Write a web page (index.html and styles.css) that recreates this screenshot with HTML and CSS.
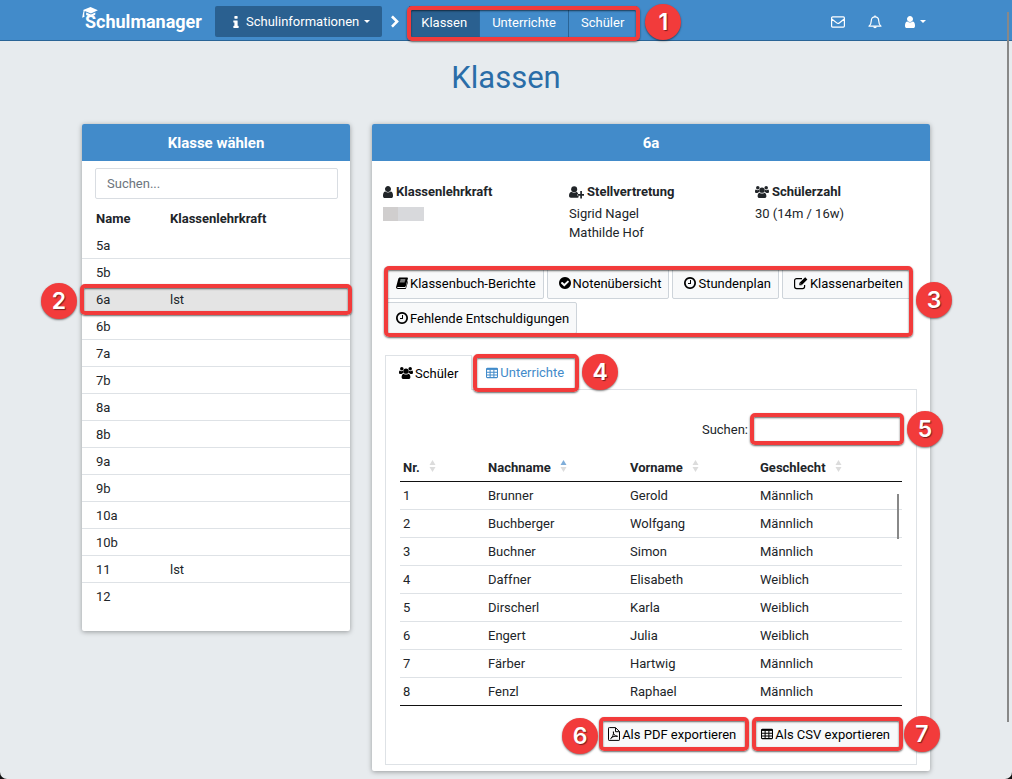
FILE: index.html
```html
<!DOCTYPE html>
<html lang="de">
<head>
<meta charset="utf-8">
<meta name="viewport" content="width=device-width, initial-scale=1">
<title>Schulmanager – Klassen</title>
<link rel="stylesheet" href="styles.css">
</head>
<body>
<svg class="sprite" aria-hidden="true">
  <symbol id="i-user" viewBox="256 0 1280 1792"><path d="M1536 1399q0 109-62.5 187t-150.5 78h-854q-88 0-150.5-78t-62.5-187q0-85 8.5-160.5t31.5-152 58.5-131 94-89 134.5-34.5q131 128 313 128t313-128q76 0 134.5 34.5t94 89 58.5 131 31.5 152 8.5 160.5zm-256-887q0 159-112.5 271.5t-271.5 112.5-271.5-112.5-112.5-271.5 112.5-271.5 271.5-112.5 271.5 112.5 112.5 271.5z"/></symbol>
  <symbol id="i-chevron" viewBox="320 64 1088 1664"><path d="M1363 877l-742 742q-19 19-45 19t-45-19l-166-166q-19-19-19-45t19-45l531-531-531-531q-19-19-19-45t19-45l166-166q19-19 45-19t45 19l742 742q19 19 19 45t-19 45z"/></symbol>
  <symbol id="i-info" viewBox="576 0 640 1664"><path d="M1216 1344v128q0 26-19 45t-45 19h-512q-26 0-45-19t-19-45v-128q0-26 19-45t45-19h64v-384h-64q-26 0-45-19t-19-45v-128q0-26 19-45t45-19h384q26 0 45 19t19 45v576h64q26 0 45 19t19 45zm-128-1152v192q0 26-19 45t-45 19h-256q-26 0-45-19t-19-45v-192q0-26 19-45t45-19h256q26 0 45 19t19 45z"/></symbol>
  <symbol id="i-check" viewBox="128 0 1536 1792"><path d="M1412 734q0-28-18-46l-91-90q-19-19-45-19t-45 19l-408 407-226-226q-19-19-45-19t-45 19l-91 90q-18 18-18 46 0 27 18 45l362 362q19 19 45 19 27 0 46-19l543-543q18-18 18-45zm252 162q0 209-103 385.5t-279.5 279.5-385.5 103-385.5-103-279.5-279.5-103-385.5 103-385.5 279.5-279.5 385.5-103 385.5 103 279.5 279.5 103 385.5z"/></symbol>
  <symbol id="i-clock" viewBox="128 0 1536 1792"><path d="M1024 544v448q0 14-9 23t-23 9h-320q-14 0-23-9t-9-23v-64q0-14 9-23t23-9h224v-352q0-14 9-23t23-9h64q14 0 23 9t9 23zm416 352q0-148-73-273t-198-198-273-73-273 73-198 198-73 273 73 273 198 198 273 73 273-73 198-198 73-273zm224 0q0 209-103 385.5t-279.5 279.5-385.5 103-385.5-103-279.5-279.5-103-385.5 103-385.5 279.5-279.5 385.5-103 385.5 103 279.5 279.5 103 385.5z"/></symbol>
  <symbol id="i-userplus" viewBox="0 0 16 14"><circle cx="5.5" cy="4" r="3.200"/><path d="M2.800 6.800C1 7 0 8.700 0 11c0 1.300.8 2 2 2h7.200c.5 0 .8-.1 1-.3V11H8.800V9h.9C9.300 7.700 8.700 7 8 6.800c-1.500 1.300-3.700 1.300-5.200 0z"/><path d="M12 6h1.800v3.100H17v1.800h-3.200V14H12v-3.100H9.200V9.100H12z"/></symbol>
  <symbol id="i-users" viewBox="0 0 15 14"><circle cx="7.500" cy="5" r="2.900"/><path d="M4.900 7.800C3.300 8 2.800 9.700 2.800 11.500c0 1.200.8 2 2 2h5.400c1.200 0 2-.8 2-2 0-1.800-.5-3.500-2.100-3.700-1.600 1.200-3.600 1.200-5.200 0z"/><circle cx="3" cy="2.400" r="1.900"/><circle cx="12" cy="2.400" r="1.900"/><path d="M1 4.300c1 .9 2.300 1 3.300.4-.1 1 .2 1.700.7 2.300-.9 0-1.700.3-2.300 1H1.500C.6 8 0 7.500 0 6.700 0 5.600.2 4.500 1 4.300zM14 4.300c-1 .9-2.300 1-3.300.4.1 1-.2 1.700-.7 2.300.9 0 1.700.3 2.300 1h1.200c.9 0 1.500-.5 1.500-1.300 0-1.100-.2-2.200-1-2.400z"/></symbol>
  <symbol id="i-book" viewBox="0 0 13 14"><path fill-rule="evenodd" d="M4.200 1h7.900c.6 0 1 .5.800 1.200l-2.300 8c-.3.900-.8 1.200-1.500 1.200H2c-.5 0-.9.200-.8.600.1.300.4.400.9.400h7.600c.4 0 .7-.2.800-.6l2.100-7.100c.5.300.5.800.3 1.400l-2 6.500c-.2.700-.7 1-1.400 1H2C.8 13.600-.2 12.500.1 11.300L2.500 2.500C2.800 1.600 3.300 1 4.200 1zM4.900 3.300l-.3.900h5.300l.3-.9zm-.6 2-.3.900h5.300l.3-.9z"/></symbol>
  <symbol id="i-edit" viewBox="0 0 14 14"><path fill="none" stroke="currentColor" stroke-width="1.200" d="M8 2.600H2.600a2 2 0 0 0-2 2v6a2 2 0 0 0 2 2h6a2 2 0 0 0 2-2V9"/><path d="M11.200 1.200 13.400 3.400 7.600 9.300H5.300V7z"/><path d="m6.200 7.500 1 1" stroke="#fff" stroke-width=".7"/></symbol>
  <symbol id="i-table" viewBox="0 0 14 14"><path fill="none" stroke="currentColor" stroke-width="1.200" d="M1.500 1.600h11q.9 0 .9.900v9q0 .9-.9.900h-11q-.9 0-.9-.9v-9q0-.9.900-.9zM.6 6.200h12.800M.6 9.300h12.800M4.800 3v9.400M9.200 3v9.400"/><path d="M.6 1.600h12.800v1.800H.6z"/></symbol>
  <symbol id="i-pdf" viewBox="0 0 12 14"><path fill="none" stroke="currentColor" d="M1.500.6h6l4 4v8.200q0 .6-.6.600H1.100q-.6 0-.6-.6V1.200q0-.6.6-.6zM7.500.8v3.900h3.900M2.600 11.600C4.800 10.200 5.900 6.600 5.400 4.700 5 6.900 6.900 9.500 9.600 9.300 7.400 8.800 4.500 9.400 2.600 11.600z"/></symbol>
  <symbol id="i-mail" viewBox="0 0 14 14"><path fill="none" stroke="currentColor" stroke-width="1.200" d="M1.600 1.900h10.800q1 0 1 1v8.200q0 1-1 1H1.600q-1 0-1-1V2.900q0-1 1-1zM.8 4 5.700 7.900q1.300 1 2.600 0L13.200 4"/></symbol>
  <symbol id="i-bell" viewBox="0 0 14 14"><path fill="none" stroke="currentColor" stroke-width="1.200" stroke-linejoin="round" d="M7 1.800c2.400 0 3.700 1.700 3.700 4 0 2.800.8 4.100 2.300 5.400H1c1.500-1.300 2.300-2.600 2.300-5.400 0-2.300 1.300-4 3.700-4z"/><path d="M6.300.4h1.400v1.500H6.300zM5.200 11.500h3.600a1.800 1.800 0 0 1-3.600 0z"/></symbol>
  <symbol id="i-cap" viewBox="0 0 18 14"><path d="M9 0 17 3.500 9.500 7 2.800 4.300C2.200 6 2 7.500 2.600 10.500L0 11.500C.8 8 .9 6 1.600 4L1 3.300zM4.300 5.900 9.500 8l4.700-2.200v2.400c-2 2.300-7 2.500-9.900.4z"/></symbol>
  <symbol id="i-sort" viewBox="0 0 7 12"><path class="sort-up" d="M3.500 0 6.500 5h-6z"/><path d="M.5 7h6l-3 5z"/></symbol>
</svg>

<header class="topbar">
  <div class="container topbar-row">
    <a class="brand" href="#"><svg class="brand-cap"><use href="#i-cap"/></svg>Schulmanager</a>
    <button class="module" type="button"><svg class="icon w-info"><use href="#i-info"/></svg>Schulinformationen<span class="caret"></span></button>
    <svg class="crumb"><use href="#i-chevron"/></svg>
    <nav class="subnav marked">
      <a class="subnav-link current" href="#">Klassen</a>
      <a class="subnav-link" href="#">Unterrichte</a>
      <a class="subnav-link" href="#">Schüler</a>
      <span class="frame frame-nav"></span><span class="badge badge-nav">1</span>
    </nav>
    <div class="tools">
      <button type="button" class="tool" aria-label="Nachrichten"><svg class="icon w14"><use href="#i-mail"/></svg></button>
      <button type="button" class="tool" aria-label="Benachrichtigungen"><svg class="icon w14"><use href="#i-bell"/></svg></button>
      <button type="button" class="tool" aria-label="Konto"><svg class="icon w10"><use href="#i-user"/></svg><span class="caret"></span></button>
    </div>
  </div>
</header>

<main class="container">
  <h1 class="title">Klassen</h1>
  <div class="columns">
    <section class="card card-list">
      <h2 class="card-head">Klasse wählen</h2>
      <div class="search-box"><input class="search" type="search" placeholder="Suchen..." aria-label="Klasse suchen"></div>
      <table class="classes">
        <thead><tr><th class="c-name">Name</th><th>Klassenlehrkraft</th></tr></thead>
        <tbody>
          <tr><td>5a</td><td></td></tr>
          <tr><td>5b</td><td></td></tr>
          <tr class="selected marked"><td>6a</td><td>lst<span class="frame frame-row"></span><span class="badge badge-row">2</span></td></tr>
          <tr><td>6b</td><td></td></tr>
          <tr><td>7a</td><td></td></tr>
          <tr><td>7b</td><td></td></tr>
          <tr><td>8a</td><td></td></tr>
          <tr><td>8b</td><td></td></tr>
          <tr><td>9a</td><td></td></tr>
          <tr><td>9b</td><td></td></tr>
          <tr><td>10a</td><td></td></tr>
          <tr><td>10b</td><td></td></tr>
          <tr><td>11</td><td>lst</td></tr>
          <tr><td>12</td><td></td></tr>
        </tbody>
      </table>
    </section>

    <section class="card card-detail">
      <h2 class="card-head">6a</h2>
      <div class="facts">
        <div><h3 class="fact-head"><svg class="icon w10"><use href="#i-user"/></svg>Klassenlehrkraft</h3><span class="redacted"></span></div>
        <div><h3 class="fact-head"><svg class="icon w15"><use href="#i-userplus"/></svg>Stellvertretung</h3>Sigrid Nagel<br>Mathilde Hof</div>
        <div><h3 class="fact-head"><svg class="icon w14"><use href="#i-users"/></svg>Schülerzahl</h3>30 (14m / 16w)</div>
      </div>
      <div class="actions marked">
        <button type="button" class="btn"><svg class="icon w12"><use href="#i-book"/></svg>Klassenbuch-Berichte</button>
        <button type="button" class="btn"><svg class="icon w12"><use href="#i-check"/></svg>Notenübersicht</button>
        <button type="button" class="btn"><svg class="icon w12"><use href="#i-clock"/></svg>Stundenplan</button>
        <button type="button" class="btn"><svg class="icon w14"><use href="#i-edit"/></svg>Klassenarbeiten</button>
        <button type="button" class="btn"><svg class="icon w12"><use href="#i-clock"/></svg>Fehlende Entschuldigungen</button>
        <span class="frame frame-actions"></span><span class="badge badge-actions">3</span>
      </div>
      <div class="tabs">
        <button type="button" class="tab active"><svg class="icon w14"><use href="#i-users"/></svg>Schüler</button>
        <button type="button" class="tab marked"><svg class="icon w12"><use href="#i-table"/></svg>Unterrichte<span class="frame frame-tab"></span><span class="badge badge-tab">4</span></button>
      </div>
      <div class="panel">
        <div class="filter">
          <label for="filter">Suchen:</label>
          <span class="marked"><input id="filter" class="filter-input" type="search"><span class="frame frame-input"></span><span class="badge badge-input">5</span></span>
        </div>
        <div class="table-wrap">
          <table class="students">
            <colgroup><col class="s-nr"><col class="s-last"><col class="s-first"><col></colgroup>
            <thead><tr>
              <th>Nr.<svg class="sort"><use href="#i-sort"/></svg></th>
              <th>Nachname<svg class="sort sorted"><use href="#i-sort"/></svg></th>
              <th>Vorname<svg class="sort"><use href="#i-sort"/></svg></th>
              <th>Geschlecht<svg class="sort"><use href="#i-sort"/></svg></th>
            </tr></thead>
            <tbody>
              <tr><td>1</td><td>Brunner</td><td>Gerold</td><td>Männlich</td></tr>
              <tr><td>2</td><td>Buchberger</td><td>Wolfgang</td><td>Männlich</td></tr>
              <tr><td>3</td><td>Buchner</td><td>Simon</td><td>Männlich</td></tr>
              <tr><td>4</td><td>Daffner</td><td>Elisabeth</td><td>Weiblich</td></tr>
              <tr><td>5</td><td>Dirscherl</td><td>Karla</td><td>Weiblich</td></tr>
              <tr><td>6</td><td>Engert</td><td>Julia</td><td>Weiblich</td></tr>
              <tr><td>7</td><td>Färber</td><td>Hartwig</td><td>Männlich</td></tr>
              <tr><td>8</td><td>Fenzl</td><td>Raphael</td><td>Männlich</td></tr>
            </tbody>
          </table>
          <span class="thumb"></span>
        </div>
        <div class="exports">
          <button type="button" class="btn marked"><svg class="icon w12"><use href="#i-pdf"/></svg>Als PDF exportieren<span class="frame frame-btn"></span><span class="badge badge-pdf">6</span></button>
          <button type="button" class="btn marked"><svg class="icon w12"><use href="#i-table"/></svg>Als CSV exportieren<span class="frame frame-btn"></span><span class="badge badge-csv">7</span></button>
        </div>
      </div>
    </section>
  </div>
</main>
<span class="page-thumb"></span>
</body>
</html>
```

FILE: styles.css
```css
*, *::before, *::after { box-sizing: border-box; }

html { background: #111; }

body {
  margin: 0;
  min-height: 100vh;
  background: #e7ebee;
  border-radius: 0 0 7px 7px;
  color: #212529;
  font: 13px/19px Roboto, "Liberation Sans", sans-serif;
}

button, input { font: inherit; color: inherit; margin: 0; }
a { color: inherit; text-decoration: none; }
h1, h2, h3 { margin: 0; }

.sprite { display: none; }
.container { max-width: 848px; margin: 0 auto; }

.icon { height: 14px; flex: none; fill: currentColor; }
.w-info { width: 6px; }
.w10 { width: 10px; }
.w12 { width: 12px; }
.w14 { width: 14px; }
.w15 { width: 15px; }

.caret {
  border: 3px solid transparent;
  border-top-color: currentColor;
  border-bottom: 0;
}

/* Top bar */
.topbar { background: #428bca; border-bottom: 1px solid #2a6496; color: #fff; }
.topbar-row { display: flex; align-items: center; height: 40px; padding-top: 3px; }

.brand {
  position: relative;
  width: 133px;
  padding-left: 3px;
  font-size: 18px;
  font-weight: 700;
}
.brand-cap { position: absolute; left: 0; top: -5px; width: 17px; height: 13px; fill: #fff; }

.module {
  display: flex;
  align-items: center;
  gap: 7px;
  height: 31px;
  padding: 0 12px 0 18px;
  border: 0;
  border-radius: 2px;
  background: #2a6090;
  color: #fff;
}
.module .caret { margin-left: -2px; }
.crumb { width: 8px; height: 14px; margin: 0 10px 0 9px; fill: #fff; }

.subnav { display: flex; height: 31px; }
.subnav-link { display: flex; align-items: center; padding: 2px 12px 0; border-right: 1px solid #2a6496; }
.subnav-link.current { background: #2a6090; }

.tools { display: flex; gap: 23px; margin-left: auto; }
.tool { display: flex; align-items: center; gap: 5px; padding: 0; border: 0; background: none; color: #fff; }
.tool:last-child { margin-right: 4px; }

.title {
  padding: 17px 0 26px;
  color: #2a6da8;
  font-size: 31px;
  font-weight: 400;
  line-height: 40px;
  text-align: center;
}

/* Cards */
.columns { display: grid; grid-template-columns: repeat(12, 1fr); gap: 22px; align-items: start; }
.card { background: #fff; border-radius: 2px; box-shadow: 0 1px 5px rgba(0, 0, 0, .35); }
.card-list { grid-column: span 4; padding-bottom: 21px; }
.card-detail { grid-column: span 8; padding-bottom: 6px; }
.card-head {
  padding: 10px 9px 8px;
  border-radius: 2px 2px 0 0;
  background: #428bca;
  color: #fff;
  font-size: 15px;
  font-weight: 700;
  line-height: 19px;
  text-align: center;
}

.search-box { padding: 7px 12px 6px 13px; }
.search { display: block; width: 100%; height: 31px; padding: 0 11px; border: 1px solid #d9dde2; border-radius: 2px; background: #fff; }
.search::placeholder { color: #6c757d; opacity: 1; }

table { width: 100%; border-collapse: separate; border-spacing: 0; table-layout: fixed; }
th { text-align: left; font-weight: 700; }

.classes th, .classes td { height: 27px; padding: 0 0 0 14px; }
.classes td { border-bottom: 1px solid #dee2e6; }
.classes tr:last-child td { border-bottom: 0; }
.classes .c-name { width: 74px; }
.selected { background: #e4e4e4; }

.facts { display: grid; grid-template-columns: repeat(3, 1fr); min-height: 106px; padding-top: 21px; }
.facts > div { padding-left: 11px; }
.fact-head { display: flex; align-items: center; gap: 3px; margin-bottom: 3px; font-size: 13px; line-height: 19px; }
.redacted { display: block; width: 41px; height: 14px; margin-top: 6px; background: linear-gradient(90deg, #d0cece 15px, #d8d9dc 15px); }

.btn {
  display: flex;
  align-items: center;
  gap: 2px;
  height: 32px;
  padding: 0 7px 0 11px;
  border: 1px solid #ced4da;
  border-radius: 2px;
  background: #f8f9fa;
  color: #000;
  white-space: nowrap;
}
.actions { display: flex; flex-wrap: wrap; gap: 3px; margin: 0 12px; }

.tabs { display: flex; margin: 21px 13px 0; }
.tab {
  display: flex;
  align-items: center;
  gap: 2px;
  height: 34px;
  padding: 0 13px;
  border: 1px solid transparent;
  border-bottom: 0;
  background: none;
  color: #428bca;
}
.tab.active { position: relative; height: 35px; margin-bottom: -1px; border-color: #dee2e6; background: #fff; color: #000; }
.panel { margin: 0 13px; padding: 25px 14px 14px; border: 1px solid #dee2e6; }

.filter { display: flex; justify-content: flex-end; align-items: center; gap: 4px; }
.filter-input { display: block; width: 150px; height: 28px; border: 1px solid #ced4da; background: #fff; }

.table-wrap { position: relative; margin-top: 11px; }
.s-nr { width: 85px; }
.s-last { width: 142px; }
.s-first { width: 130px; }
.students th, .students td { height: 28px; padding: 0 3px; border-bottom: 1px solid #dee2e6; }
.students thead th, .students tr:last-child td { border-color: #111; }
.sort { --up: #dcdcdc; width: 7px; height: 12px; margin-left: 9px; fill: #dcdcdc; }
.sort.sorted { --up: #7fadd9; }
.sort-up { fill: var(--up); }

.exports { display: flex; justify-content: flex-end; gap: 5px; margin-top: 12px; }
.exports .btn { padding: 0 11px 0 7px; }

/* Scroll thumbs */
.thumb { position: absolute; top: 40px; right: 3px; width: 2px; height: 45px; background: #888; }
.page-thumb { position: fixed; top: 12px; right: 3px; width: 2px; height: 710px; max-height: 92vh; background: #888; }

/* Numbered callouts laid over the controls they point at */
.marked { position: relative; }
.frame {
  position: absolute;
  z-index: 2;
  inset: -2px;
  border: 4px solid #f23b3b;
  border-radius: 5px;
  box-shadow: 0 1px 2px rgba(0, 0, 0, .6), inset 0 1px 2px rgba(0, 0, 0, .6);
  pointer-events: none;
}
.badge {
  position: absolute;
  z-index: 3;
  width: 36px;
  height: 36px;
  border-radius: 50%;
  background: #f23b3b;
  box-shadow: 0 1px 2px rgba(0, 0, 0, .5);
  color: #fff;
  font: 600 23px/36px Inter, "Open Sans", sans-serif;
  text-align: center;
  text-shadow: 1px 1px 1px rgba(0, 0, 0, .5);
}
.frame-nav { inset: 0 -3px -4px -2px; }
.badge-nav { left: calc(100% + 8px); top: -2px; }
.badge-row { right: calc(100% + 5px); top: -3px; }
.frame-actions { inset: -1px 5px -3px 0; }
.badge-actions { right: -34px; top: 15px; }
.frame-tab { inset: -2px -2px -3px 0; }
.badge-tab { left: calc(100% + 5px); top: -2px; }
.badge-input { left: calc(100% + 5px); top: -4px; }
.badge-pdf { right: calc(100% + 3px); top: -1px; }
.badge-csv { left: calc(100% + 3px); top: -3px; }
```
